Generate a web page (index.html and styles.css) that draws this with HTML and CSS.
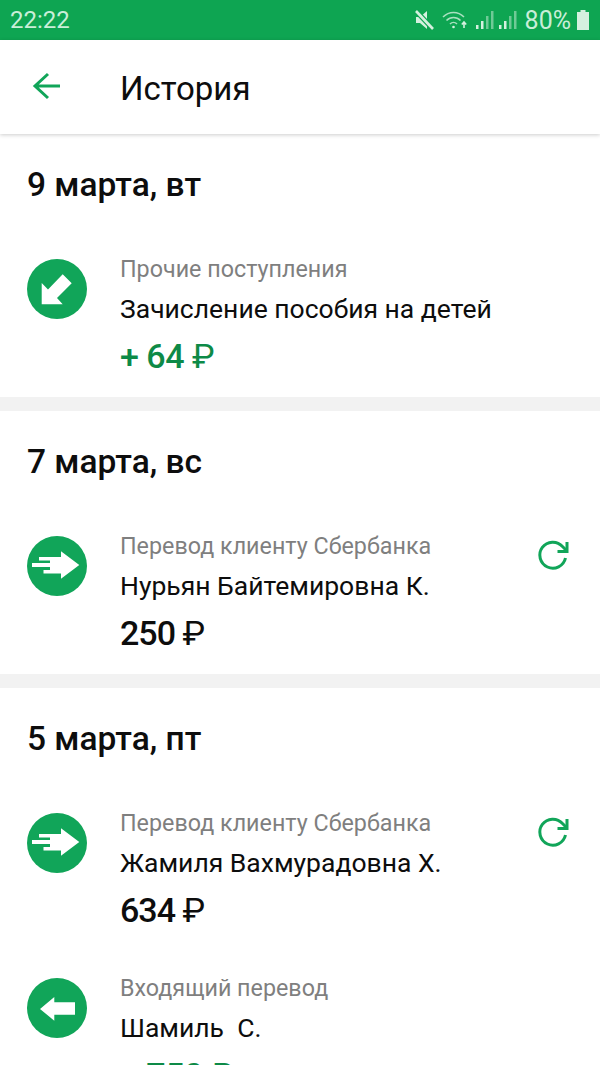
FILE: index.html
```html
<!DOCTYPE html>
<html lang="ru">

<head>
    <meta charset="UTF-8">
    <meta name="viewport" content="width=device-width, initial-scale=1.0">
    <title>История</title>
    <link rel="stylesheet" href="styles.css">
</head>

<body>
    <div class="status">
        <span class="time">22:22</span>
        <div class="status-right">
            <svg class="ico-mute" width="22" height="22" viewBox="0 0 22 22">
                <path d="M3 8h4l7-6v18l-7-6H3z" fill="#d5f0df" />
                <path d="M3 2l17 18" stroke="#0ea552" stroke-width="5" />
                <path d="M3 2l17 18" stroke="#d5f0df" stroke-width="2.600" />
            </svg>
            <svg class="ico-wifi" width="28" height="22" viewBox="0 0 28 22" fill="none" stroke="#a9e0bf" stroke-width="1.6">
                <path d="M2 8c6-6 15-6 21 0" />
                <path d="M5.500 11.500c4-4 10-4 14 0" />
                <path d="M9 15c2-2 5-2 7 0" />
                <circle cx="12.500" cy="18" r="1.300" fill="#d5f0df" stroke="none" />
                <path d="M23 19v-6M20.800 15.500l2.200-2.500 2.200 2.500" stroke="#d5f0df" />
            </svg>
            <svg class="ico-signal" width="22" height="22" viewBox="0 0 22 22">
                <rect x="2" y="16" width="2.500" height="4" fill="#d5f0df" />
                <rect x="7" y="12" width="2.500" height="8" fill="#d5f0df" />
                <rect x="12" y="7" width="2.500" height="13" fill="#6fca96" />
                <rect x="17" y="2" width="2.500" height="18" fill="#6fca96" />
            </svg>
            <svg class="ico-signal second" width="22" height="22" viewBox="0 0 22 22">
                <rect x="2" y="16" width="2.500" height="4" fill="#d5f0df" />
                <rect x="7" y="12" width="2.500" height="8" fill="#d5f0df" />
                <rect x="12" y="7" width="2.500" height="13" fill="#6fca96" />
                <rect x="17" y="2" width="2.500" height="18" fill="#6fca96" />
            </svg>
            <span class="percent">80%</span>
            <svg class="ico-batt" width="14" height="22" viewBox="0 0 14 22">
                <path d="M4.500 1h5v2h3.500v18H1V3h3.500z" fill="#d5f0df" />
            </svg>
        </div>
    </div>

    <div class="header">
        <svg class="back" width="30" height="30" viewBox="0 0 30 30" fill="none" stroke="#11a559" stroke-width="3">
            <path d="M31 15H6M18 3L5 15l13 12" />
        </svg>
        <span class="title">История</span>
    </div>

    <div class="section">
        <h2 class="date">9 марта, вт</h2>
        <div class="item">
            <div class="round">
                <svg width="60" height="60" viewBox="0 0 60 60">
                    <path d="M14.700 45.300V24l6.300 6.500 14.700-15.200 9 9L30 39l5.700 6.300z" fill="#fff" />
                </svg>
            </div>
            <div class="info">
                <div class="label">Прочие поступления</div>
                <div class="name">Зачисление пособия на детей</div>
                <div class="sum plus">+ 64 <span class="rub">₽</span></div>
            </div>
        </div>
    </div>

    <div class="section">
        <h2 class="date">7 марта, вс</h2>
        <div class="item">
            <div class="round">
                <svg width="60" height="60" viewBox="0 0 60 60">
                    <path d="M34 15.300L52.300 29 34 42.700v-5.200H16.500V34H23v-3H5v-4h18v-2.500H12V21h22z" fill="#fff" />
                </svg>
            </div>
            <div class="info">
                <div class="label">Перевод клиенту Сбербанка</div>
                <div class="name">Нурьян Байтемировна К.</div>
                <div class="sum">250 <span class="rub">₽</span></div>
            </div>
            <svg class="repeat" width="34" height="34" viewBox="0 0 34 34" fill="none" stroke="#11a559" stroke-width="3">
                <path d="M28.500 19a13 13 0 1 1-3-11.500L29 11" />
                <path d="M30 3v9.500h-9.500" />
            </svg>
        </div>
    </div>

    <div class="section">
        <h2 class="date">5 марта, пт</h2>
        <div class="item">
            <div class="round">
                <svg width="60" height="60" viewBox="0 0 60 60">
                    <path d="M34 15.300L52.300 29 34 42.700v-5.200H16.500V34H23v-3H5v-4h18v-2.500H12V21h22z" fill="#fff" />
                </svg>
            </div>
            <div class="info">
                <div class="label">Перевод клиенту Сбербанка</div>
                <div class="name">Жамиля Вахмурадовна Х.</div>
                <div class="sum">634 <span class="rub">₽</span></div>
            </div>
            <svg class="repeat" width="34" height="34" viewBox="0 0 34 34" fill="none" stroke="#11a559" stroke-width="3">
                <path d="M28.500 19a13 13 0 1 1-3-11.500L29 11" />
                <path d="M30 3v9.500h-9.500" />
            </svg>
        </div>
        <div class="item">
            <div class="round">
                <svg width="60" height="60" viewBox="0 0 60 60">
                    <path d="M13 31l14.300-12v5.300H48v12.400H27.300v6z" fill="#fff" />
                </svg>
            </div>
            <div class="info">
                <div class="label">Входящий перевод</div>
                <div class="name">Шамиль&nbsp; С.</div>
                <div class="sum plus">+ 750 <span class="rub">₽</span></div>
            </div>
        </div>
    </div>
</body>

</html>
```

FILE: styles.css
```css
* {
    margin: 0;
    padding: 0;
    box-sizing: border-box;
}

html,
body {
    height: 1065px;
    overflow: hidden;
}

body {
    background-color: #f2f2f2;
    font-family: Roboto, "Noto Sans", sans-serif;
    color: #0d0d0d;
}

.status {
    height: 40px;
    background-color: #0ea552;
    display: flex;
    justify-content: space-between;
    align-items: center;
    padding: 0 10px;
    color: #c9eed8;
    font-size: 24px;
}

.status-right {
    display: flex;
    align-items: center;
}

.ico-wifi {
    margin-left: 6px;
}

.ico-signal {
    margin-left: 5px;
}

.ico-signal.second {
    margin-left: 1px;
}

.percent {
    font-size: 25px;
    margin-left: 6px;
    margin-right: 5px;
}

.header {
    height: 94px;
    background-color: #fff;
    box-shadow: 0 1px 4px rgba(0, 0, 0, .2);
    display: flex;
    align-items: center;
    padding-left: 30px;
    position: relative;
}

.back {
    width: 30px;
    height: 30px;
    margin-bottom: 2px;
}

.title {
    font-size: 33px;
    margin-left: 60px;
    padding-top: 2px;
}

.section {
    background-color: #fff;
    padding: 29px 0 0 27px;
    margin-bottom: 14px;
}

.date {
    font-size: 33.500px;
    font-weight: 500;
    line-height: 44px;
    margin-bottom: 43px;
}

.item {
    display: flex;
    align-items: flex-start;
    padding-bottom: 19px;
    height: 165px;
}

.item:last-child {
    height: auto;
}

.round {
    width: 60px;
    height: 60px;
    border-radius: 50%;
    background-color: #11a559;
    margin-top: 8.500px;
    flex-shrink: 0;
}

.round svg {
    display: block;
}

.info {
    margin-left: 33px;
    padding-top: 4px;
    flex-grow: 1;
}

.label {
    font-size: 23.300px;
    line-height: 30px;
    color: #7f7f7f;
}

.name {
    font-size: 26.500px;
    line-height: 36px;
    margin-top: 7px;
}

.sum {
    font-size: 34px;
    font-weight: 500;
    letter-spacing: -1px;
    line-height: 44px;
    margin-top: 7px;
}

.sum.plus {
    color: #0d8a47;
    letter-spacing: -.5px;
}

.rub {
    font-weight: 400;
}

.repeat {
    margin: 12px 29px 0 0;
}
```
